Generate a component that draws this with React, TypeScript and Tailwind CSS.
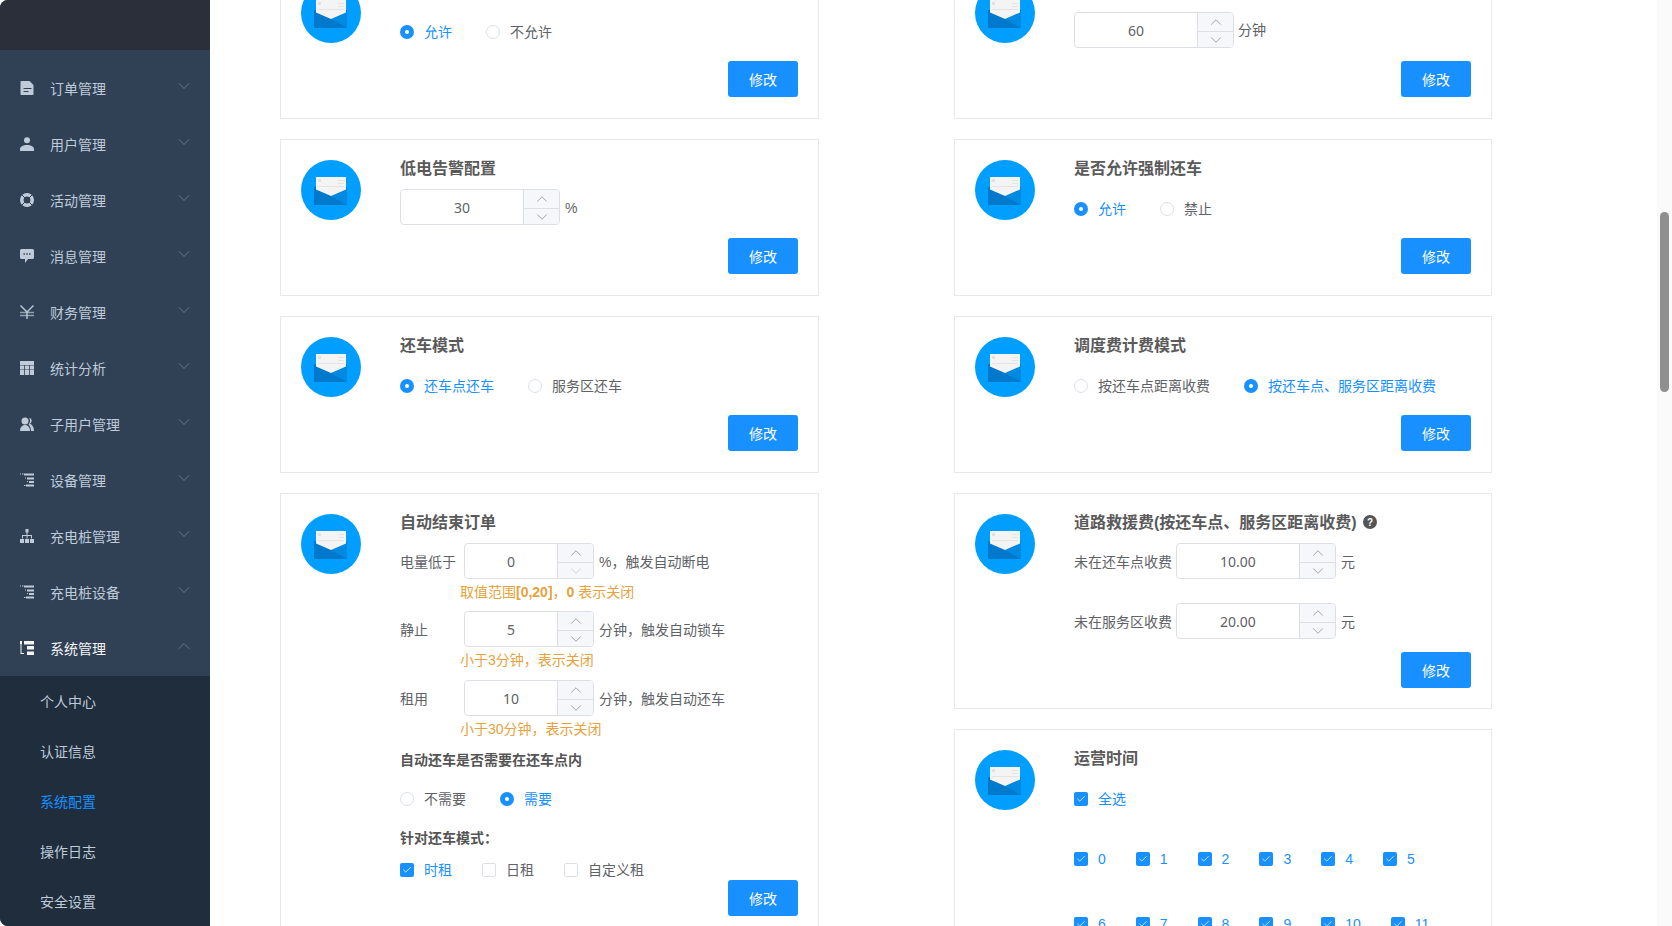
import React from "react";
import { ChevronUp, ChevronDown, Check } from "lucide-react";

const iconCls = "w-[14px] h-[14px] shrink-0";

const FileIcon = () => (
    <svg viewBox="0 0 14 14" className={iconCls} fill="#bfcbd9">
        <path fillRule="evenodd" d="M1 0h8l4 4v9a1 1 0 0 1-1 1H1a1 1 0 0 1-1-1V1a1 1 0 0 1 1-1Zm2 7v1h8V7H3Zm0 3v1h5v-1H3Z" transform="translate(0.5 0)" />
    </svg>
);
const UserIcon = () => (
    <svg viewBox="0 0 14 14" className={iconCls} fill="#bfcbd9">
        <circle cx="7" cy="3.2" r="3" />
        <path d="M0 14v-2c0-2.300 3-4 7-4s7 1.700 7 4v2H0Z" />
    </svg>
);
const RingIcon = () => (
    <svg viewBox="0 0 14 14" className={iconCls} fill="none">
        <circle cx="7" cy="7" r="5.200" stroke="#bfcbd9" strokeWidth="3.600" />
        <path d="M2 2 4.800 4.800M12 2 9.200 4.800M2 12 4.800 9.200M12 12 9.200 9.200" stroke="#304156" strokeWidth="1" />
    </svg>
);
const CommentIcon = () => (
    <svg viewBox="0 0 14 14" className={iconCls} fill="#bfcbd9">
        <path fillRule="evenodd" d="M1.500 0h11A1.500 1.500 0 0 1 14 1.500v7a1.500 1.500 0 0 1-1.500 1.500H8l-3 4v-4H1.500A1.500 1.500 0 0 1 0 8.500v-7A1.500 1.500 0 0 1 1.500 0ZM3.500 4.300v1.400h1.400V4.300H3.500Zm2.800 0v1.400h1.400V4.300H6.300Zm2.800 0v1.400h1.400V4.300H9.100Z" />
    </svg>
);
const YenIcon = () => (
    <svg viewBox="0 0 14 14" className={iconCls} fill="none" stroke="#bfcbd9" strokeWidth="1.400">
        <path d="M0.500 0.500 7 7l6.500-6.500M7 7v7" />
        <path d="M0 7.500h14M0 10.500h14" strokeOpacity="0.700" />
    </svg>
);
const TableIcon = () => (
    <svg viewBox="0 0 14 14" className={iconCls} fill="#bfcbd9">
        <path fillRule="evenodd" d="M0 0h14v14H0V0Zm0 4v.600h4v3.800H0V9h4v5h.800V9h4.400v5h.800V9h4v-.600h-4V4.600h4V4H0Zm4.800.600v3.800h4.400V4.600H4.800Z" />
    </svg>
);
const UsersIcon = () => (
    <svg viewBox="0 0 14 14" className={iconCls} fill="#bfcbd9">
        <circle cx="5" cy="4" r="3.500" />
        <path d="M0 14c0-3.500 2-6 5-6s5 2.500 5 6H0Z" />
        <path d="M9 .8c2 .4 3 2 2.600 3.700-.2 1-.8 1.800-1.600 2.300 2.300.8 4 3.200 4 7.200h-3c0-3-1-5-2.500-6.500 1-1 1.500-2.200 1.500-3.500 0-1.400-.4-2.600-1-3.700Z" />
    </svg>
);
const ListIcon = () => (
    <svg viewBox="0 0 14 14" className={iconCls} fill="#bfcbd9">
        <path d="M0 .5h1v1H0zM2 .5h1.500v1H2zM4 .5h10v2H4zM5 4.500h1v1H5zM7 4.500h7v2H7zM7 8h1v1H7zM9 8h5v2H9zM4 12h1.500v1H4zM6 11.500h8v2H6z" />
    </svg>
);
const SitemapIcon = () => (
    <svg viewBox="0 0 14 14" className={iconCls} fill="#bfcbd9">
        <path d="M5.500 0h3v3.500h-1V6H12v3.500h-1V7H7.500v2.500h-1V7H3v2.500H2V6h4.500V3.500h-1V0Z" />
        <path d="M0 10h4v4H0zM5 10h4v4H5zM10 10h4v4h-4z" />
    </svg>
);
const TreeIcon = () => (
    <svg viewBox="0 0 14 14" className={iconCls} fill="#f4f4f5">
        <path d="M0 0h2v3H1.500v9H4v1H.5V3H0V0Z" />
        <path d="M4 0h10v3.500H4zM7 5h7v3.500H7zM7 10.500h7V14H7z" />
    </svg>
);

const menus = [
    { label: "订单管理", Icon: FileIcon },
    { label: "用户管理", Icon: UserIcon },
    { label: "活动管理", Icon: RingIcon },
    { label: "消息管理", Icon: CommentIcon },
    { label: "财务管理", Icon: YenIcon },
    { label: "统计分析", Icon: TableIcon },
    { label: "子用户管理", Icon: UsersIcon },
    { label: "设备管理", Icon: ListIcon },
    { label: "充电桩管理", Icon: SitemapIcon },
    { label: "充电桩设备", Icon: ListIcon },
];

const subMenus = ["个人中心", "认证信息", "系统配置", "操作日志", "安全设置"];

function Sidebar() {
    return (
        <aside className="w-[210px] h-full shrink-0 flex flex-col overflow-hidden rounded-l-lg bg-[#304156]">
            <div className="h-[50px] shrink-0 bg-[#2b2f3a]" />
            <nav className="pt-[10px] flex-1">
                {menus.map(({ label, Icon }) => (
                    <div key={label} className="h-[56px] pl-5 pr-[17px] flex items-center text-[14px] text-[#bfcbd9]">
                        <Icon />
                        <span className="ml-4 flex-1 pt-[2px]">{label}</span>
                        <ChevronDown size={20} strokeWidth={1} className="text-[#75838f] -mt-[4px] -mr-[1px]" />
                    </div>
                ))}
                <div className="h-[56px] pl-5 pr-[17px] flex items-center text-[14px] text-[#f4f4f5]">
                    <TreeIcon />
                    <span className="ml-4 flex-1 pt-[2px]">系统管理</span>
                    <ChevronUp size={20} strokeWidth={1} className="text-[#75838f] -mt-[4px] -mr-[1px]" />
                </div>
                <div className="bg-[#1f2d3d]">
                    {subMenus.map((s) => (
                        <div
                            key={s}
                            className={`h-[50px] pl-10 pt-[2px] flex items-center text-[14px] ${s === "系统配置" ? "text-[#1890ff]" : "text-[#bfcbd9]"}`}
                        >
                            {s}
                        </div>
                    ))}
                </div>
            </nav>
        </aside>
    );
}

function MailBadge() {
    return (
        <svg viewBox="0 0 60 60" className="w-[60px] h-[60px] shrink-0">
            <circle cx="30" cy="30" r="30" fill="#009eff" />
            <rect x="13" y="27" width="33" height="18" fill="#0078cc" />
            <path d="M30 36 46 27v18Z" fill="#0089e0" />
            <path d="M15 17h30v12.500L30 36 15 29.500Z" fill="#f4f4f4" />
            <path d="M17 19h3v3h-3z" fill="#e2e2e2" />
            <path d="M37 20h6v1h-6zM37 23h6v1h-6zM17 26h26v1H17z" fill="#e4e4e4" />
        </svg>
    );
}

function Card({ title, children }: { title?: React.ReactNode; children: React.ReactNode }) {
    return (
        <section className="border border-[#e8e8e8] pt-5 pl-5 pr-5 pb-[21px] flex mb-5 bg-white">
            <MailBadge />
            <div className="flex-1 ml-[39px]">
                <h3 className="h-4 pt-[2px] text-[16px] font-bold text-[#5a5a5a] flex items-center mb-[13px]">{title}</h3>
                {children}
            </div>
        </section>
    );
}

function SubmitRow({ className = "mt-[9px]" }: { className?: string }) {
    return (
        <div className={`flex justify-end ${className}`}>
            <button className="w-[70px] h-[36px] pt-[2px] rounded-[3px] bg-[#1890ff] text-white text-[14px]">修改</button>
        </div>
    );
}

function NumberInput({ value, width = "w-[160px]", minDisabled = false }: { value: string; width?: string; minDisabled?: boolean }) {
    return (
        <div className={`${width} h-[36px] shrink-0 flex border border-[#dcdfe6] rounded-[4px] overflow-hidden bg-white`}>
            <div className="flex-1 flex items-center justify-center text-[14px] text-[#606266] font-['Noto_Sans',sans-serif]">{value}</div>
            <div className="w-[36px] flex flex-col border-l border-[#dcdfe6] bg-[#f5f7fa]">
                <div className="flex-1 flex items-center justify-center border-b border-[#dcdfe6]">
                    <ChevronUp size={18} strokeWidth={1.1} className="text-[#8f9399]" />
                </div>
                <div className="flex-1 flex items-center justify-center">
                    <ChevronDown size={18} strokeWidth={1.1} className={`-mt-px ${minDisabled ? "text-[#c8ccd3]" : "text-[#8f9399]"}`} />
                </div>
            </div>
        </div>
    );
}

function Radio({ label, checked = false }: { label: string; checked?: boolean }) {
    return (
        <span className={`flex items-center text-[14px] ${checked ? "text-[#1890ff]" : "text-[#606266]"}`}>
            {checked ? (
                <span className="w-[14px] h-[14px] rounded-full bg-[#1890ff] flex items-center justify-center">
                    <span className="w-1 h-1 rounded-full bg-white" />
                </span>
            ) : (
                <span className="w-[14px] h-[14px] rounded-full border border-[#dcdfe6] bg-white" />
            )}
            <span className="ml-[10px]">{label}</span>
        </span>
    );
}

function CheckBox({ label, checked = false }: { label: string; checked?: boolean }) {
    return (
        <span className={`flex items-center text-[14px] ${checked ? "text-[#1890ff]" : "text-[#606266]"}`}>
            {checked ? (
                <span className="w-[14px] h-[14px] rounded-[2px] bg-[#1890ff] flex items-center justify-center">
                    <Check size={10} strokeWidth={1.8} className="text-white" />
                </span>
            ) : (
                <span className="w-[14px] h-[14px] rounded-[2px] border border-[#dcdfe6] bg-white" />
            )}
            <span className="ml-[10px]">{label}</span>
        </span>
    );
}

function RadioRow({ children }: { children: React.ReactNode }) {
    return <div className="h-[40px] flex items-center gap-[34px]">{children}</div>;
}

function UnitRow({ children }: { children: React.ReactNode }) {
    return <div className="h-[40px] flex items-start text-[14px] text-[#606266]">{children}</div>;
}

function AutoRow({ label, value, tail, minDisabled }: { label: string; value: string; tail: string; minDisabled?: boolean }) {
    return (
        <div className="h-[36px] flex items-center text-[14px] text-[#606266]">
            <span className="w-[64px] shrink-0 pt-[2px]">{label}</span>
            <NumberInput value={value} width="w-[130px]" minDisabled={minDisabled} />
            <span className="ml-[5px] pt-[2px]">{tail}</span>
        </div>
    );
}

function Hint({ children, className }: { children: React.ReactNode; className: string }) {
    return <div className={`h-5 leading-5 pl-[60px] text-[14px] text-[#e6a23c] ${className}`}>{children}</div>;
}

function LeftColumn() {
    return (
        <div className="w-[539px] shrink-0">
            <Card>
                <RadioRow>
                    <Radio label="允许" checked />
                    <Radio label="不允许" />
                </RadioRow>
                <SubmitRow />
            </Card>
            <Card title="低电告警配置">
                <UnitRow>
                    <NumberInput value="30" />
                    <span className="ml-[5px] h-[36px] pt-[3px] flex items-center">%</span>
                </UnitRow>
                <SubmitRow />
            </Card>
            <Card title="还车模式">
                <RadioRow>
                    <Radio label="还车点还车" checked />
                    <Radio label="服务区还车" />
                </RadioRow>
                <SubmitRow />
            </Card>
            <Card title="自动结束订单">
                <AutoRow label="电量低于" value="0" tail="%，触发自动断电" minDisabled />
                <Hint className="mt-[3px] mb-[9px]">
                    取值范围<b>[0,20]</b>，<b>0</b> 表示关闭
                </Hint>
                <AutoRow label="静止" value="5" tail="分钟，触发自动锁车" />
                <Hint className="mt-[3px] mb-[10px]">小于3分钟，表示关闭</Hint>
                <AutoRow label="租用" value="10" tail="分钟，触发自动还车" />
                <Hint className="mt-[3px]">小于30分钟，表示关闭</Hint>
                <div className="mt-[11px] h-5 leading-5 text-[14px] font-bold text-[#555555]">自动还车是否需要在还车点内</div>
                <div className="mt-[19px] h-5 flex items-center gap-[34px]">
                    <Radio label="不需要" />
                    <Radio label="需要" checked />
                </div>
                <div className="mt-[19px] h-5 leading-5 text-[14px] font-bold text-[#555555]">针对还车模式：</div>
                <div className="mt-3 h-5 flex items-center gap-[30px]">
                    <CheckBox label="时租" checked />
                    <CheckBox label="日租" />
                    <CheckBox label="自定义租" />
                </div>
                <SubmitRow className="mt-0" />
            </Card>
        </div>
    );
}

function RightColumn() {
    return (
        <div className="w-[538px] shrink-0">
            <Card>
                <UnitRow>
                    <NumberInput value="60" />
                    <span className="ml-[4px] h-[36px] flex items-center">分钟</span>
                </UnitRow>
                <SubmitRow />
            </Card>
            <Card title="是否允许强制还车">
                <RadioRow>
                    <Radio label="允许" checked />
                    <Radio label="禁止" />
                </RadioRow>
                <SubmitRow />
            </Card>
            <Card title="调度费计费模式">
                <RadioRow>
                    <Radio label="按还车点距离收费" />
                    <Radio label="按还车点、服务区距离收费" checked />
                </RadioRow>
                <SubmitRow />
            </Card>
            <Card
                title={
                    <>
                        道路救援费(按还车点、服务区距离收费)
                        <svg viewBox="0 0 14 14" className="w-[14px] h-[14px] ml-[6px] -mt-[2px]">
                            <circle cx="7" cy="7" r="7" fill="#555555" />
                            <text x="7" y="10.500" textAnchor="middle" fontSize="10" fontWeight="700" fill="#ffffff">?</text>
                        </svg>
                    </>
                }
            >
                <div className="h-[36px] flex items-center text-[14px] text-[#606266]">
                    <span className="w-[102px] shrink-0 pt-[2px]">未在还车点收费</span>
                    <NumberInput value="10.00" />
                    <span className="ml-[5px] pt-[2px]">元</span>
                </div>
                <div className="mt-[24px] h-[36px] flex items-center text-[14px] text-[#606266]">
                    <span className="w-[102px] shrink-0 pt-[2px]">未在服务区收费</span>
                    <NumberInput value="20.00" />
                    <span className="ml-[5px] pt-[2px]">元</span>
                </div>
                <SubmitRow className="mt-[13px] -mb-px" />
            </Card>
            <Card title="运营时间">
                <RadioRow>
                    <CheckBox label="全选" checked />
                </RadioRow>
                <div className="mt-[30px] flex flex-wrap gap-x-[30px] gap-y-[45px]">
                    {["0", "1", "2", "3", "4", "5", "6", "7", "8", "9", "10", "11"].map((h) => (
                        <div key={h} className="h-5 flex items-center">
                            <CheckBox label={h} checked />
                        </div>
                    ))}
                </div>
            </Card>
        </div>
    );
}

function Scrollbar() {
    return (
        <div className="w-[15px] h-full shrink-0 bg-[#fafafa] pt-[212px] pl-[3px]">
            <div className="w-[9px] h-[180px] rounded-full bg-[#8f8f8f]" />
        </div>
    );
}

export default function App() {
    return (
        <div className="w-[1672px] h-[926px] flex overflow-hidden bg-white font-['Liberation_Sans','Noto_Sans_CJK_SC',sans-serif]">
            <Sidebar />
            <main className="flex-1 h-full overflow-hidden pl-[70px]">
                <div className="flex gap-[135px] -mt-[38px]">
                    <LeftColumn />
                    <RightColumn />
                </div>
            </main>
            <Scrollbar />
        </div>
    );
}
